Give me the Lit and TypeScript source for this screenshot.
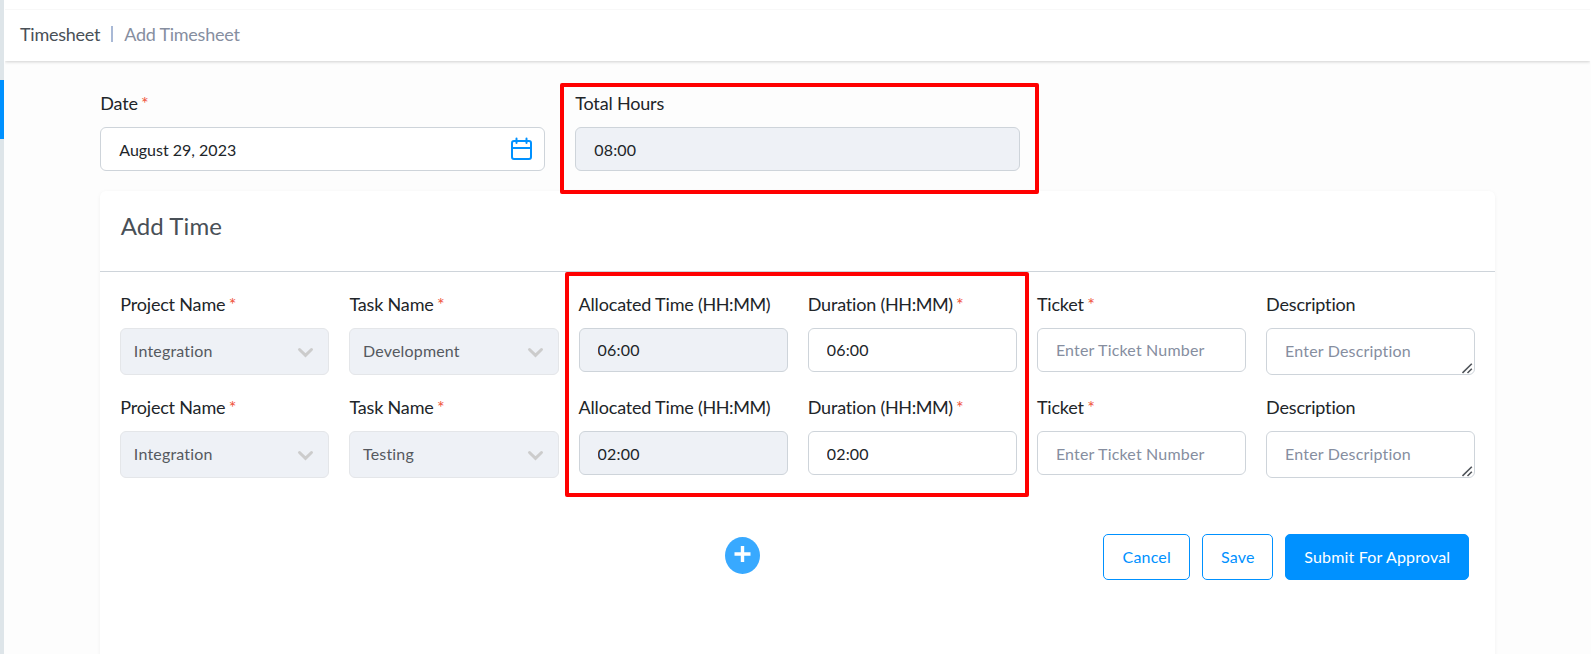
import { LitElement, html, css, nothing } from "lit";
import { customElement, property } from "lit/decorators.js";

const fieldStyles = css`
  * { box-sizing: border-box; }
  .label { display: block; height: 24px; font-size: 18px; line-height: 22px; letter-spacing: -0.18px; color: #212529; white-space: nowrap; }
  .unit { letter-spacing: -0.42px; }
  .star { color: #f0543c; font-size: 18px; line-height: 16px; margin-left: 3.3px; }
  .control {
    display: block; width: 100%; height: 44px; margin: 11px 0 0; padding: 0 18px 0.7px 18px;
    border: 1px solid #ced4da; border-radius: 6px; background: #fff; color: #212529;
    font-family: Lato, sans-serif; font-size: 16px; letter-spacing: 0.18px; outline: none;
  }
  .control:disabled { background: #eef1f6; opacity: 1; }
  .control::placeholder { color: #868e9f; opacity: 1; }
  .area-box { position: relative; }
  .area { height: 47px; padding: 10px 18px; line-height: 24px; resize: none; overflow: hidden; }
  .grip { position: absolute; right: 2px; bottom: 1px; }
  .select {
    display: flex; align-items: center; justify-content: space-between; height: 47px;
    padding: 0 14px 0 12.6px; border-color: #e4e6e9; background: #eef1f6; color: #55595f;
  }
  .select span { padding-bottom: 2px; }
  .select svg { margin-top: 1px; }
  .date { display: flex; align-items: center; justify-content: space-between; padding: 0 11px 0 18px; letter-spacing: 0; }
  .date span { padding-top: 1px; }
  .date svg { margin-bottom: 1px; }
`;

@customElement("form-field")
class FormField extends LitElement {
  @property() label = "";
  @property() unit = "";
  @property() kind = "input";
  @property() value = "";
  @property() hint = "";
  @property({ type: Boolean }) required = false;
  @property({ type: Boolean }) locked = false;

  static styles = [fieldStyles, css`:host { display: block; min-width: 0; }`];

  control() {
    if (this.kind === "select")
      return html`<div class="control select"><span>${this.value}</span>
        <svg width="17" height="11" viewBox="0 0 17 11" fill="none" stroke="#cccccc" stroke-width="3" stroke-linecap="round"><path d="M2.5 2.5 8.5 8.3 14.5 2.5"/></svg></div>`;
    if (this.kind === "area")
      return html`<div class="area-box"><textarea class="control area" rows="1" placeholder=${this.hint}></textarea>
        <svg class="grip" width="11" height="11" viewBox="0 0 11 11" stroke="#50545a" stroke-width="1.6"><path d="M0.5 10 9.8 0.7M5.5 10 9.8 5.7"/></svg></div>`;
    if (this.kind === "date")
      return html`<div class="control date"><span>${this.value}</span>
        <svg width="23" height="24" viewBox="0 0 23 24" fill="none" stroke="#0091ff" stroke-width="2" stroke-linecap="round"><rect x="2" y="4" width="19" height="18" rx="2"/><path d="M2 11H21M6.5 1.5V6M16.5 1.5V6"/></svg></div>`;
    return html`<input class="control" .value=${this.value} placeholder=${this.hint} ?disabled=${this.locked} />`;
  }

  render() {
    return html`<label class="label">${this.label}${this.unit ? html` <span class="unit">${this.unit}</span>` : nothing}${this.required ? html`<span class="star">*</span>` : nothing}</label>${this.control()}`;
  }
}

const entries = [
  { project: "Integration", task: "Development", time: "06:00" },
  { project: "Integration", task: "Testing", time: "02:00" },
];

@customElement("app-root")
class AppRoot extends LitElement {
  static styles = css`
    * { box-sizing: border-box; }
    :host { display: block; height: 654px; overflow: hidden; font-family: Lato, sans-serif; background: #fdfdfd; }
    .shell { display: flex; height: 654px; position: relative; }
    .rail { width: 4px; background: #dee5e9; padding-top: 80px; }
    .active { height: 59px; background: #0091ff; }
    .main { flex: 1; padding: 9px 0 0 1px; min-width: 0; background: linear-gradient(#fff 61px, #fdfdfd 61px); }
    .head {
      display: flex; align-items: center; height: 52px; padding: 0 0 3px 15px; margin-right: 1px;
      border-top: 1px solid #f8f8f8; background: #fff; box-shadow: 0 1px 3px rgba(0, 0, 0, 0.18);
      clip-path: inset(0 0 -5px 0);
      font-size: 18px; letter-spacing: -0.25px; color: #495057;
    }
    .bar { width: 2px; height: 16px; background: #a9b9d6; margin: 0 11px 0 11px; }
    .crumb { color: #868e9f; }
    .content { width: 1395px; margin-left: 95.25px; }
    .top { display: grid; grid-template-columns: repeat(3, 1fr); gap: 30px; padding-top: 31.4px; height: 130px; }
    .card { height: 480px; background: #fff; border-radius: 6px 6px 0 0; box-shadow: 0 1px 4px rgba(0, 0, 0, 0.05); }
    .title { height: 81px; padding: 19px 20px 0 20.4px; border-bottom: 1px solid #ced4da; font-size: 24px; line-height: 32px; letter-spacing: 0.1px; color: #495057; }
    .rows { padding: 21px 20px 0; }
    .row { display: grid; grid-template-columns: repeat(6, minmax(0, 1fr)); gap: 20px; height: 103.4px; }
    .foot { display: flex; align-items: flex-start; padding: 34.2px 26px 0 0; }
    .plus { display: block; margin: 3px auto 0 624.75px; }
    .btn {
      height: 46px; margin: 0 0 0 12px; padding: 0; border: 1px solid #0091ff; border-radius: 5px; background: #fff;
      color: #0091ff; font-family: Lato, sans-serif; font-size: 16px; line-height: 43px; letter-spacing: 0.18px; white-space: nowrap;
    }
    .cancel { width: 87px; }
    .save { width: 71px; }
    .submit { width: 184px; background: #0091ff; color: #fff; }
    .mark { position: absolute; border: 4px solid #f00; border-radius: 2px; pointer-events: none; }
    .mark-total { left: 560px; top: 83px; width: 479px; height: 111px; }
    .mark-times { left: 565px; top: 272px; width: 464px; height: 225px; }
  `;

  render() {
    return html`
      <div class="shell">
        <div class="rail"><div class="active"></div></div>
        <div class="main">
          <div class="head"><span>Timesheet</span><i class="bar"></i><span class="crumb">Add Timesheet</span></div>
          <div class="content">
            <div class="top">
              <form-field label="Date" kind="date" value="August 29, 2023" required></form-field>
              <form-field label="Total Hours" value="08:00" locked></form-field>
            </div>
            <div class="card">
              <div class="title">Add Time</div>
              <div class="rows">
                ${entries.map((e) => html`<div class="row">
                  <form-field label="Project Name" kind="select" value=${e.project} required></form-field>
                  <form-field label="Task Name" kind="select" value=${e.task} required></form-field>
                  <form-field label="Allocated Time" unit="(HH:MM)" value=${e.time} locked></form-field>
                  <form-field label="Duration" unit="(HH:MM)" value=${e.time} required></form-field>
                  <form-field label="Ticket" hint="Enter Ticket Number" required></form-field>
                  <form-field label="Description" kind="area" hint="Enter Description"></form-field>
                </div>`)}
              </div>
              <div class="foot">
                <svg class="plus" width="35" height="37" viewBox="0 0 35 37"><ellipse cx="17.5" cy="18.5" rx="17.5" ry="18.5" fill="#38a9ff"/><path d="M17.5 9V25M9.5 17H25.5" stroke="#fff" stroke-width="3.4"/></svg>
                <button class="btn cancel">Cancel</button>
                <button class="btn save">Save</button>
                <button class="btn submit">Submit For Approval</button>
              </div>
            </div>
          </div>
        </div>
        <div class="mark mark-total"></div>
        <div class="mark mark-times"></div>
      </div>`;
  }
}
